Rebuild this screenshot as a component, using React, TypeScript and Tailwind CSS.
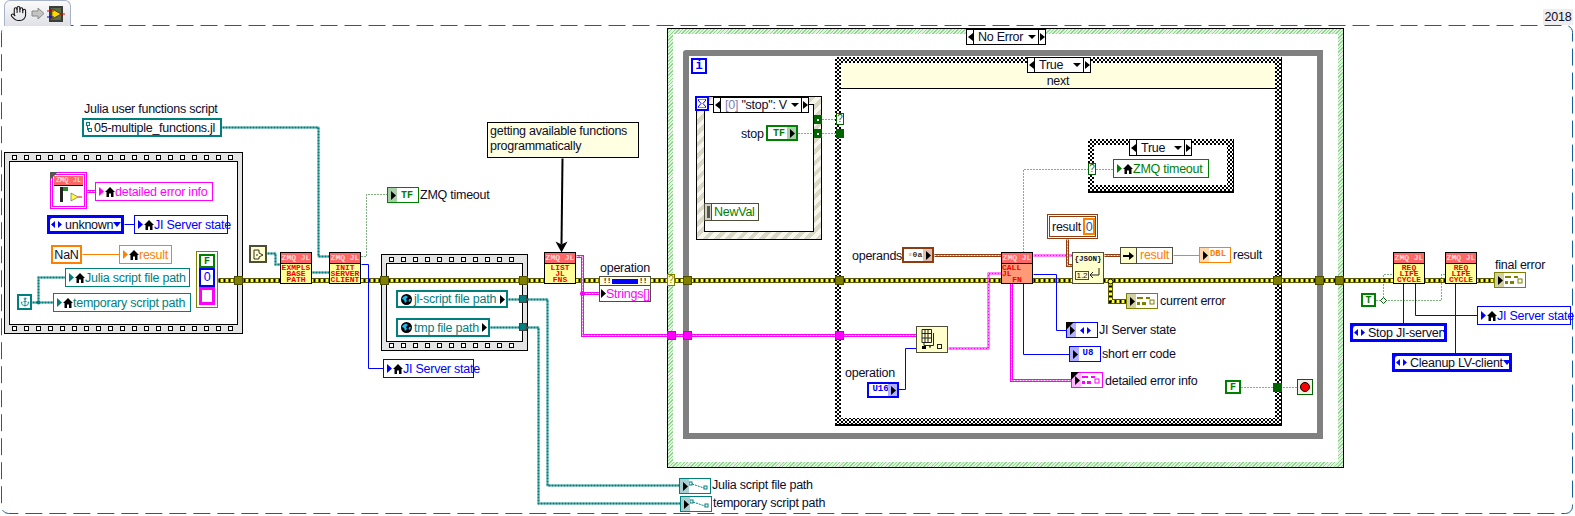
import { Anchor, Hand } from 'lucide-react';
import { FC, ReactNode } from 'react';

type Kind = 'err' | 'path' | 'pink' | 'str' | 'blue' | 'green' | 'brown' | 'orange';
type Pt = [number, number];

const wires: [Kind, Pt[]][] = [
   ['err', [[218, 280], [1494, 280]]],
   ['path', [[222, 127], [318, 127], [318, 256], [329, 256]]],
   ['path', [[267, 253], [275, 253], [275, 264], [280, 264]]],
   ['path', [[312, 272], [329, 272]]],
   ['green', [[361, 256], [366, 256], [366, 194], [387, 194]]],
   ['blue', [[361, 264], [368, 264], [368, 368], [383, 368]]],
   ['pink', [[87, 191], [95, 191]]],
   ['blue', [[124, 224], [134, 224]]],
   ['orange', [[82, 254], [119, 254]]],
   ['path', [[32, 302], [53, 302]]],
   ['path', [[38, 302], [38, 277], [65, 277]]],
   ['path', [[508, 299], [519, 299]]],
   ['path', [[490, 327], [519, 327]]],
   ['path', [[527, 299], [547, 299], [547, 485], [679, 485]]],
   ['path', [[527, 327], [538, 327], [538, 503], [680, 503]]],
   ['pink', [[576, 256], [582, 256], [582, 335], [916, 335]]],
   ['pink', [[582, 293], [600, 293]]],
   ['green', [[798, 133], [836, 133]]],
   ['green', [[822, 119], [836, 119]]],
   ['brown', [[934, 255], [1001, 255]]],
   ['str', [[1033, 255], [1072, 255]]],
   ['brown', [[1067, 239], [1067, 265], [1072, 265]]],
   ['brown', [[1104, 255], [1120, 255]]],
   ['orange', [[1173, 255], [1199, 255]]],
   ['green', [[1023, 252], [1023, 169], [1088, 169]]],
   ['green', [[1096, 169], [1113, 169]]],
   ['err', [[1110, 280], [1110, 301], [1126, 301]]],
   ['str', [[948, 348], [988, 348], [988, 273], [1001, 273]]],
   ['blue', [[898, 389], [905, 389], [905, 348], [916, 348]]],
   ['blue', [[1033, 274], [1056, 274], [1056, 330], [1066, 330]]],
   ['blue', [[1023, 283], [1023, 354], [1069, 354]]],
   ['pink', [[1011, 283], [1011, 380], [1071, 380]]],
   ['green', [[1241, 387], [1297, 387]]],
   ['green', [[1376, 300], [1441, 300], [1441, 274], [1445, 274]]],
   ['green', [[1383, 300], [1383, 274], [1393, 274]]],
   ['blue', [[1403, 283], [1403, 323]]],
   ['blue', [[1455, 283], [1455, 353]]],
   ['blue', [[1415, 283], [1415, 315], [1477, 315]]],
];

const WireLine: FC<{ kind: Kind; pts: Pt[] }> = ({ kind, pts }) => {
   const p = pts.map((q) => q.join(',')).join(' ');
   const line = (stroke: string, width: number, dash?: string) => (
      <polyline points={p} fill="none" stroke={stroke} strokeWidth={width} strokeDasharray={dash} />
   );
   if (kind === 'err')
      return (
         <g>
            {line('#5a5a00', 5)}
            {line('#ffff33', 3)}
            {line('#000000', 3, '2 3')}
         </g>
      );
   if (kind === 'path')
      return (
         <g>
            {line('#8cc4c4', 2)}
            {line('#007f7f', 2, '2 1')}
         </g>
      );
   if (kind === 'pink')
      return (
         <g>
            {line('#ff00ff', 3)}
            {line('#ffffff', 1, '2 1')}
         </g>
      );
   if (kind === 'str')
      return (
         <g>
            {line('#ff00ff', 2)}
            {line('#ffffff', 1, '1 2')}
         </g>
      );
   if (kind === 'brown')
      return (
         <g>
            {line('#8f3c10', 3)}
            {line('#ffffff', 1, '2 1')}
         </g>
      );
   if (kind === 'blue') return line('#0000ff', 1);
   if (kind === 'orange') return line('#ff8000', 1);
   return line('#006400', 1, '1 2');
};

const Box: FC<{ c: string; children?: ReactNode }> = ({ c, children }) => (
   <div className={`absolute ${c}`}>{children}</div>
);

const T: FC<{ c: string; children: ReactNode }> = ({ c, children }) => (
   <div className={`absolute whitespace-nowrap leading-[16px] text-[#0c0c2c] ${c}`}>{children}</div>
);

const Home = () => (
   <svg width="10" height="10" viewBox="0 0 10 10" className="shrink-0">
      <path d="M5 0 L10 5 L8.5 5 L8.5 10 L6 10 L6 6.5 L4 6.5 L4 10 L1.5 10 L1.5 5 L0 5 Z" fill="#000" />
   </svg>
);

const TriR = () => (
   <svg width="5" height="9" viewBox="0 0 5 9" className="shrink-0">
      <path d="M0 0 L5 4.5 L0 9 Z" fill="currentColor" />
   </svg>
);

const EnumArrows: FC<{ color?: string }> = ({ color = '#0000ff' }) => (
   <svg width="11" height="7" viewBox="0 0 11 7" className="shrink-0">
      <path d="M4 0 L0 3.5 L4 7 Z M7 0 L11 3.5 L7 7 Z" fill={color} />
   </svg>
);

const Local: FC<{ c: string; children: ReactNode }> = ({ c, children }) => (
   <div className={`absolute flex items-center border bg-white pl-[3px] whitespace-nowrap ${c}`}>
      <TriR />
      <span className="ml-[1px]">
         <Home />
      </span>
      <span className="leading-[16px]">{children}</span>
   </div>
);

const Globe = () => (
   <svg width="11" height="11" viewBox="0 0 11 11" className="shrink-0">
      <circle cx="5.5" cy="5.5" r="5.5" fill="#000" />
      <path d="M2 3 L5 1.5 L7 3 L5 5 L6 7 L4 9 L3 6 L1 5 Z M8 5 L10 5 L9 8 L7.5 7 Z" fill="#20b8f0" />
   </svg>
);

const GlobalVar: FC<{ c: string; children: ReactNode }> = ({ c, children }) => (
   <div className={`absolute flex items-center border-[2px] border-[#007f7f] bg-white pr-[1px] pl-[3px] whitespace-nowrap text-[#007f7f] ${c}`}>
      <Globe />
      <span className="ml-[2px] flex-1 leading-[16px]">{children}</span>
      <span className="text-black">
         <TriR />
      </span>
   </div>
);

const Vi: FC<{ c: string; lines: string[]; body?: string }> = ({ c, lines, body = 'bg-[#ffff99]' }) => (
   <div className={`absolute flex flex-col border border-black font-['Liberation_Mono'] tracking-normal ${body} ${c}`}>
      <div className="h-[11px] border-b border-black bg-[#ff6666] text-center text-[8px] leading-[10px] font-bold whitespace-pre text-[#ffdcdc]">
         ZMQ JL
      </div>
      <div className="flex flex-1 flex-col items-center justify-center text-[8px] leading-[6px] font-bold text-[#f00000]">
         {lines.map((l) => (
            <div key={l}>{l}</div>
         ))}
      </div>
   </div>
);

const Term: FC<{ c: string; tint: string; side?: 'l' | 'r'; children: ReactNode }> = ({ c, tint, side = 'l', children }) => (
   <div className={`absolute flex h-[16px] w-[32px] items-center justify-center border bg-white tracking-normal ${c}`}>
      <div className={`absolute top-0 bottom-0 w-[9px] ${side === 'l' ? 'left-0' : 'right-0'} ${tint}`} />
      <div className={`absolute text-black ${side === 'l' ? 'left-[3px]' : 'right-[1px]'}`}>
         <TriR />
      </div>
      {children}
   </div>
);

const ClusterGlyph: FC<{ color: string }> = ({ color }) => (
   <svg width="18" height="8" viewBox="0 0 18 8" className="ml-[7px]">
      <rect x="0" y="0" width="6" height="2" fill={color} />
      <rect x="9" y="0" width="4" height="2" fill={color} />
      <rect x="0" y="5" width="3" height="3" fill={color} />
      <rect x="5" y="5" width="4" height="3" fill={color} />
      <rect x="13" y="3" width="4" height="4" fill="none" stroke={color} />
   </svg>
);

const PathGlyph = () => (
   <svg width="22" height="10" viewBox="0 0 22 10" className="ml-[7px]">
      <rect x="1" y="1" width="3" height="3" fill="none" stroke="#007f7f" />
      <path d="M4 3 L16 7" stroke="#007f7f" strokeDasharray="2 1" />
      <rect x="16" y="5" width="3" height="3" fill="none" stroke="#007f7f" />
   </svg>
);

const Selector: FC<{ c: string; children: ReactNode }> = ({ c, children }) => (
   <div className={`absolute flex items-stretch border border-black bg-white ${c}`}>
      <div className="flex w-[7px] items-center justify-center border-r border-black">
         <span className="block h-0 w-0 border-y-[4px] border-r-[5px] border-y-transparent border-r-black" />
      </div>
      <div className="flex flex-1 items-center justify-between pr-[2px] pl-[4px] leading-[14px] whitespace-nowrap">
         <span>{children}</span>
         <span className="block h-0 w-0 border-x-[4px] border-t-[4px] border-x-transparent border-t-black" />
      </div>
      <div className="flex w-[7px] items-center justify-center border-l border-black">
         <span className="block h-0 w-0 border-y-[4px] border-l-[5px] border-y-transparent border-l-black" />
      </div>
   </div>
);

const Enum: FC<{ c: string; children: ReactNode }> = ({ c, children }) => (
   <div className={`absolute flex items-center overflow-hidden border-[3px] border-[#0000ff] bg-white pr-[2px] pl-[1px] whitespace-nowrap text-[#0c0c2c] ${c}`}>
      <div className="absolute -top-[3px] -left-[3px] h-0 w-0 border-t-[8px] border-r-[8px] border-t-[#555] border-r-transparent" />
      <span className="mr-[3px]">
         <EnumArrows />
      </span>
      <span className="flex-1 leading-[14px]">{children}</span>
      <span className="block h-0 w-0 border-x-[4px] border-t-[5px] border-x-transparent border-t-[#0000ff]" />
   </div>
);

const Sprockets: FC<{ c: string; n: number }> = ({ c, n }) => (
   <div className={`absolute flex gap-[7px] ${c}`}>
      {Array.from({ length: n }, (_, i) => (
         <span key={i} className="h-[5px] w-[5px] shrink-0 border border-black bg-white" />
      ))}
   </div>
);

const Film: FC<{ c: string; n: number }> = ({ c, n }) => (
   <div className={`absolute border border-black bg-[#e4e4e4] ${c}`}>
      <Sprockets c="top-[2px] left-[7px]" n={n} />
      <div className="absolute top-[8px] right-[4px] bottom-[8px] left-[4px] border border-black bg-white" />
      <Sprockets c="bottom-[2px] left-[7px]" n={n} />
   </div>
);

const CHECK = 'bg-[conic-gradient(#000_25%,#fff_0_50%,#000_0_75%,#fff_0)] bg-[length:4px_4px]';

const Check: FC<{ c: string; children?: ReactNode }> = ({ c, children }) => (
   <div className={`absolute border-r-[1px] border-b-[2px] border-black p-[6px] ${CHECK} ${c}`}>
      <div className="h-full w-full bg-white">{children}</div>
   </div>
);

const tunnels: string[] = [
   'left-[234px] top-[276px]',
   'left-[380px] top-[276px]',
   'left-[519px] top-[276px]',
   'left-[683px] top-[276px]',
   'left-[835px] top-[276px]',
   'left-[1273px] top-[276px]',
   'left-[1315px] top-[276px]',
   'left-[1335px] top-[276px]',
];

const pinkTunnels = ['left-[667px]', 'left-[683px]', 'left-[835px]'];

const App: FC = () => {
   return (
      <div className="relative h-[516px] w-[1575px] overflow-hidden bg-white font-['Liberation_Sans',sans-serif] text-[12.5px] tracking-[-0.25px] text-[#0c0c2c]">
         {/* structures */}
         <Film c="left-[4px] top-[152px] w-[239px] h-[182px]" n={19} />
         <Film c="left-[381px] top-[254px] w-[147px] h-[97px]" n={11} />

         <div className="absolute top-[28px] left-[667px] h-[440px] w-[677px] border-[1px] border-black bg-[repeating-linear-gradient(135deg,#8fd68f_0_1px,#dff3df_1px_2.5px)] p-[5px]">
            <div className="h-full w-full bg-white" />
         </div>
         <div className="absolute top-[50px] left-[683px] h-[389px] w-[640px] rounded-tl-[3px] border-[6px] border-[#808080] bg-white" />

         <div className="absolute top-[96px] left-[696px] h-[144px] w-[126px] border border-black bg-[repeating-linear-gradient(135deg,#d8d8c4_0_4px,#f6f6ec_4px_8px)] p-[7px]">
            <div className="h-full w-full border border-black bg-white" />
         </div>

         <Check c="left-[835px] top-[57px] w-[447px] h-[369px]">
            <div className="flex h-[26px] items-end justify-center border-b border-black bg-[#ffffdf] leading-[14px]">next</div>
         </Check>
         <Check c="left-[1088px] top-[139px] w-[146px] h-[54px]" />

         {/* wires and the dashed diagram frame */}
         <svg className="absolute inset-0" width="1575" height="516">
            <rect x="1.5" y="25.5" width="1571" height="488" rx="7" fill="none" stroke="#14609c" strokeWidth="1" strokeDasharray="17 7" />
            <g transform="translate(0.5 0.5)">
               {wires.map(([kind, pts], i) => (
                  <WireLine key={i} kind={kind} pts={pts} />
               ))}
               <line x1="562" y1="158" x2="561" y2="244" stroke="#000" strokeWidth="2" />
               <path d="M555 241 L561 244 L567 241 L561 252 Z" fill="#000" />
               <circle cx="38" cy="302" r="2" fill="#007f7f" />
               <circle cx="1110" cy="281" r="2.5" fill="#ffff33" stroke="#000" />
               <path d="M1383 297 L1386 300 L1383 303 L1380 300 Z" fill="#fff" stroke="#006400" />
               <circle cx="582" cy="293" r="2.5" fill="#ff00ff" />
            </g>
         </svg>

         {/* tab */}
         <div className="absolute top-0 left-[4px] flex h-[26px] w-[67px] items-center gap-[2px] rounded-t-[6px] border border-b-0 border-[#a8b2c8] bg-[linear-gradient(#fafafa,#dfe1e6)] pl-[5px]">
            <Hand size={17} strokeWidth={1.5} color="#111" />
            <svg width="14" height="13" viewBox="0 0 14 13" className="ml-[2px]">
               <path d="M1 4 L7 4 L7 1 L13 6.5 L7 12 L7 9 L1 9 Z" fill="#c4c4c4" stroke="#8a8a8a" />
            </svg>
            <svg width="18" height="16" viewBox="0 0 18 16">
               <rect x="2" y="0" width="14" height="16" fill="#3c3c3c" />
               <rect x="4" y="2" width="10" height="12" fill="#5a6a4a" />
               <path d="M5 3 L14 8 L5 13 Z" fill="#ffd800" stroke="#000" strokeWidth="0.5" />
               <line x1="0" y1="5" x2="7" y2="5" stroke="#e00000" />
               <line x1="0" y1="11" x2="7" y2="11" stroke="#0000e0" />
               <line x1="13" y1="8" x2="18" y2="8" stroke="#e00000" />
            </svg>
         </div>
         <div className="absolute top-[9px] left-[1543px] h-[16px] w-[30px] bg-[#eeeeee] text-center leading-[16px]">2018</div>

         {/* first sequence frame */}
         <div className="absolute top-[172px] left-[50px] h-[37px] w-[37px] border-[3px] border-double border-[#ff00ff] bg-white p-[1px]">
            <div className="h-[10px] border-b border-black bg-[#ff6666] text-center font-['Liberation_Mono'] text-[7px] leading-[9px] font-bold tracking-normal whitespace-nowrap text-[#ffdcdc]">ZMQ JL</div>
            <svg width="29" height="19" viewBox="0 0 29 19">
               <rect x="6" y="1" width="3" height="15" fill="#222" />
               <path d="M9 1 L14 1 L14 5 L9 5 Z" fill="#2a8a2a" />
               <path d="M17 7 L24 11 L17 15 Z" fill="#ffff33" stroke="#555" strokeWidth="0.6" />
               <path d="M24 11 L28 11" stroke="#e00000" />
            </svg>
         </div>
         <div className="absolute top-[172px] left-[50px] h-0 w-0 border-t-[8px] border-r-[8px] border-t-[#555] border-r-transparent" />
         <Local c="left-[95px] top-[182px] w-[118px] h-[19px] border-[#ff00ff] text-[#ff00ff]">detailed error info</Local>
         <Enum c="left-[47px] top-[215px] w-[77px] h-[19px]">unknown</Enum>
         <Local c="left-[134px] top-[215px] w-[94px] h-[19px] border-[#0000ff] text-[#0000ff]">JI Server state</Local>
         <div className="absolute top-[245px] left-[51px] flex h-[19px] w-[31px] items-center justify-center border-[2px] border-[#ff8000] bg-white leading-[14px]">NaN</div>
         <Local c="left-[119px] top-[245px] w-[53px] h-[19px] border-[#ff8000] text-[#ff8000]">result</Local>
         <Local c="left-[65px] top-[268px] w-[125px] h-[19px] border-[#007f7f] text-[#007f7f]">Julia script file path</Local>
         <Local c="left-[53px] top-[293px] w-[138px] h-[19px] border-[#007f7f] text-[#007f7f]">temporary script path</Local>
         <div className="absolute top-[294px] left-[17px] flex h-[16px] w-[15px] items-center justify-center border-[2px] border-[#007f7f] bg-white text-[#007f7f]">
            <Anchor size={10} strokeWidth={2} />
         </div>
         <div className="absolute top-[251px] left-[196px] flex h-[57px] w-[22px] flex-col border border-[#808000] bg-white p-[2px]">
            <div className="flex h-[14px] items-center justify-center border-[2px] border-[#007f00] font-['Liberation_Mono'] text-[10px] font-bold tracking-normal text-[#007f00]">F</div>
            <div className="flex h-[19px] items-center justify-center border-[2px] border-[#0000ff] leading-none text-[#0000ff]">0</div>
            <div className="flex-1 border-[3px] border-[#ff00ff]" />
         </div>

         {/* julia path constant */}
         <T c="left-[84px] top-[101px]">Julia user functions script</T>
         <div className="absolute top-[118px] left-[82px] flex h-[19px] w-[140px] items-center border-[2px] border-[#007f7f] bg-white pl-[2px] leading-[14px] whitespace-nowrap">
            <svg width="6" height="11" viewBox="0 0 6 11" className="mr-[2px] shrink-0">
               <rect x="0.5" y="0.5" width="3" height="3" fill="none" stroke="#007f7f" />
               <rect x="2.5" y="6.5" width="3" height="3" fill="none" stroke="#007f7f" />
               <path d="M1.5 3.5 V8 H3" fill="none" stroke="#007f7f" />
            </svg>
            05-multiple_functions.jl
         </div>

         <div className="absolute top-[245px] left-[249px] flex h-[18px] w-[18px] items-center justify-center border-[2px] border-[#4d4d3a] bg-[#ffffcc]">
            <svg width="11" height="11" viewBox="0 0 11 11">
               <path d="M1 1 H6 L6 4 L10 6 L6 8 V10 H1 Z M3 6 L5 6" fill="none" stroke="#333" />
            </svg>
         </div>
         <Vi c="left-[280px] top-[252px] w-[32px] h-[32px]" lines={['EXMPLS', 'BASE', 'PATH']} />
         <Vi c="left-[329px] top-[252px] w-[32px] h-[32px]" lines={['INIT', 'SERVER', 'CLIENT']} />

         <Term c="left-[387px] top-[187px] border-[#008000]" tint="bg-[#a8d0a8]">
            <span className="ml-[8px] font-['Liberation_Mono'] text-[10px] font-bold text-[#007f00]">TF</span>
         </Term>
         <T c="left-[420px] top-[187px]">ZMQ timeout</T>
         <Local c="left-[383px] top-[359px] w-[91px] h-[19px] border-[#0000ff] text-[#0000ff]">JI Server state</Local>

         {/* second sequence frame */}
         <GlobalVar c="left-[396px] top-[290px] w-[112px] h-[18px]">jl-script file path</GlobalVar>
         <GlobalVar c="left-[396px] top-[318px] w-[94px] h-[19px]">tmp file path</GlobalVar>
         <Box c="left-[519px] top-[295px] h-[8px] w-[8px] border border-[#444] bg-[#007f7f]" />
         <Box c="left-[519px] top-[323px] h-[8px] w-[8px] border border-[#444] bg-[#007f7f]" />

         <div className="absolute top-[122px] left-[487px] h-[36px] w-[152px] border border-black bg-[#ffffe1] pt-[1px] pl-[2px] leading-[15px] whitespace-nowrap">
            getting available functions
            <br />
            programmatically
         </div>
         <Vi c="left-[544px] top-[252px] w-[32px] h-[32px]" lines={['LIST', 'JL', 'FNS']} />
         <T c="left-[600px] top-[260px]">operation</T>
         <div className="absolute top-[276px] left-[599px] flex h-[26px] w-[52px] flex-col border border-[#4d4d3a] bg-white">
            <div className="flex h-[8px] items-center justify-between bg-[#ffffdf] px-[3px] font-['Liberation_Mono'] text-[7px] leading-[8px] font-bold">
               <span>!!</span>
               <span className="h-[5px] w-[26px] bg-[#0000ff]" />
               <span>!!</span>
            </div>
            <div className="flex flex-1 items-center border-t border-[#4d4d3a] pl-[1px] leading-[14px] whitespace-nowrap text-[#ff00ff]">
               <span className="text-black">
                  <TriR />
               </span>
               Strings[]
            </div>
         </div>

         {/* outer case */}
         <Selector c="left-[966px] top-[29px] w-[80px] h-[16px]">No Error</Selector>
         <Box c="left-[667px] top-[274px] flex h-[12px] w-[8px] items-center justify-center border border-[#808000] bg-[#ffffcc] text-[10px] leading-none text-[#808000]">
            ?
         </Box>
         {pinkTunnels.map((t) => (
            <div key={t} className={`absolute top-[331px] h-[9px] w-[9px] border border-[#803080] bg-[#ff00ff] ${t}`} />
         ))}

         {/* while loop and event structure */}
         <Box c="left-[691px] top-[58px] flex h-[16px] w-[16px] items-center justify-center border-[2px] border-[#0000ff] bg-white font-['Liberation_Mono'] text-[12px] font-bold text-[#0000ff]">
            i
         </Box>
         <Box c="left-[695px] top-[96px] flex h-[15px] w-[14px] items-center justify-center border-[2px] border-[#0000ff] bg-white">
            <svg width="8" height="9" viewBox="0 0 8 9">
               <path d="M0 0 H8 V1 L5 4.5 L8 8 V9 H0 V8 L3 4.5 L0 1 Z" fill="none" stroke="#0000ff" />
            </svg>
         </Box>
         <Selector c="left-[713px] top-[97px] w-[96px] h-[16px]">
            <span className="text-[#8080b0]">[0]</span> "stop": V
         </Selector>
         <T c="left-[741px] top-[126px]">stop</T>
         <Term c="left-[766px] top-[125px] border-[#008000] border-[2px]" tint="bg-[#a8d0a8]" side="r">
            <span className="mr-[6px] font-['Liberation_Mono'] text-[10px] font-bold text-[#007f00]">TF</span>
         </Term>
         <div className="absolute top-[203px] left-[704px] flex h-[18px] w-[55px] items-center border border-[#4d4d3a] bg-white leading-[14px] text-[#007f00]">
            <span className="mr-[2px] flex h-full w-[7px] items-center justify-center border-r border-[#4d4d3a] bg-[#d4d4c8]">
               <span className="h-[12px] w-[3px] bg-[#555]" />
            </span>
            NewVal
         </div>
         <Box c="left-[814px] top-[115px] flex h-[9px] w-[8px] items-center justify-center bg-[#006400]">
            <span className="h-[2px] w-[2px] bg-white" />
         </Box>
         <Box c="left-[814px] top-[129px] flex h-[9px] w-[8px] items-center justify-center bg-[#006400]">
            <span className="h-[2px] w-[2px] bg-white" />
         </Box>
         <Box c="left-[836px] top-[113px] flex h-[12px] w-[8px] items-center justify-center border border-[#006400] bg-white text-[10px] leading-none text-[#006400]">
            ?
         </Box>
         <Box c="left-[836px] top-[129px] h-[9px] w-[8px] bg-[#006400]" />

         {/* inner case */}
         <Selector c="left-[1027px] top-[57px] w-[64px] h-[16px]">True</Selector>
         <Selector c="left-[1129px] top-[139px] w-[63px] h-[17px]">True</Selector>
         <Box c="left-[1088px] top-[163px] flex h-[12px] w-[8px] items-center justify-center border border-[#006400] bg-white text-[10px] leading-none text-[#006400]">
            ?
         </Box>
         <Local c="left-[1113px] top-[159px] w-[96px] h-[19px] border-[#008000] text-[#008000]">ZMQ timeout</Local>

         <T c="left-[852px] top-[248px]">operands</T>
         <Term c="left-[902px] top-[247px] border-[#8f3c10] border-[2px]" tint="bg-[#e0c0b0]" side="r">
            <span className="mr-[6px] font-['Liberation_Mono'] text-[8px] font-bold text-[#333]">▫0a</span>
         </Term>
         <Vi c="left-[1001px] top-[252px] w-[32px] h-[32px]" lines={['CALL JL', 'FN']} body="bg-[#ff9a78]" />

         <div className="absolute top-[214px] left-[1047px] flex h-[25px] w-[51px] items-center border-[3px] border-double border-[#8f3c10] bg-white pl-[2px] leading-[14px]">
            result
            <span className="ml-[2px] flex h-[17px] w-[12px] items-center justify-center border-[2px] border-[#ff8000] text-[#0060c0]">0</span>
         </div>
         <div className="absolute top-[252px] left-[1072px] h-[32px] w-[32px] border border-[#4d4d3a] bg-[#ffffcc]">
            <div className="text-center font-['Liberation_Mono'] text-[7.5px] leading-[12px] font-bold tracking-normal">{'{JSON}'}</div>
            <div className="absolute bottom-[3px] left-[2px] h-[9px] w-[14px] border border-[#4d4d3a] text-center text-[8px] leading-[8px] tracking-normal">1.2</div>
            <svg className="absolute right-[1px] bottom-[3px]" width="13" height="12" viewBox="0 0 13 12">
               <path d="M10 0 V7 H1 M4 4 L1 7 L4 10" fill="none" stroke="#222" />
            </svg>
         </div>
         <div className="absolute top-[247px] left-[1120px] flex h-[17px] w-[53px] border border-[#4d4d3a] bg-white leading-[14px] text-[#ff8000]">
            <span className="mr-[3px] flex w-[16px] items-center justify-center border-r border-[#4d4d3a] bg-[#ffffcc]">
               <svg width="11" height="8" viewBox="0 0 11 8">
                  <path d="M0 3 H6 V0 L11 4 L6 8 V5 H0 Z" fill="#000" />
               </svg>
            </span>
            result
         </div>
         <Term c="left-[1199px] top-[247px] border-[#ff8000]" tint="bg-[#ffd8b0]">
            <span className="ml-[6px] font-['Liberation_Mono'] text-[9px] font-bold text-[#ff8000]">DBL</span>
         </Term>
         <T c="left-[1233px] top-[247px]">result</T>
         <Term c="left-[1126px] top-[293px] border-[#808000]" tint="bg-[#d0d0a0]">
            <ClusterGlyph color="#808000" />
         </Term>
         <T c="left-[1160px] top-[293px]">current error</T>

         <Term c="left-[1066px] top-[322px] border-[#0000ff]" tint="bg-[#b0b0ff]">
            <span className="ml-[7px]">
               <EnumArrows />
            </span>
         </Term>
         <div className="absolute top-[322px] left-[1066px] h-0 w-0 border-t-[8px] border-r-[8px] border-t-black border-r-transparent" />
         <T c="left-[1099px] top-[322px]">JI Server state</T>
         <Term c="left-[1069px] top-[346px] border-[#0000ff]" tint="bg-[#b0b0ff]">
            <span className="ml-[6px] font-['Liberation_Mono'] text-[9px] font-bold text-[#0000ff]">U8</span>
         </Term>
         <T c="left-[1102px] top-[346px]">short err code</T>
         <Term c="left-[1071px] top-[372px] border-[#ff00ff]" tint="bg-[#ffb8ff]">
            <ClusterGlyph color="#ff00ff" />
         </Term>
         <div className="absolute top-[372px] left-[1071px] h-0 w-0 border-t-[8px] border-r-[8px] border-t-black border-r-transparent" />
         <T c="left-[1105px] top-[373px]">detailed error info</T>

         <T c="left-[845px] top-[365px]">operation</T>
         <Term c="left-[867px] top-[382px] border-[#0000ff] border-[2px]" tint="bg-[#b0b0ff]" side="r">
            <span className="mr-[5px] font-['Liberation_Mono'] text-[9px] font-bold text-[#0000ff]">U16</span>
         </Term>
         <div className="absolute top-[326px] left-[916px] h-[27px] w-[32px] border border-[#4d4d3a] bg-[#ffffcc]">
            <svg className="absolute top-[1px] left-[2px]" width="26" height="24" viewBox="0 0 26 24">
               <path d="M3 1.5 H12.5 V14.5 H3 Z M3 5.5 H12.5 M3 10 H12.5 M6 1.5 V14.5 M9 1.5 V14.5 M5 14.5 V17.5 H14.5 V5" fill="none" stroke="#222" />
               <rect x="3" y="18" width="4" height="3" fill="#000" />
               <rect x="18.5" y="16.5" width="4" height="4" fill="none" stroke="#222" />
               <path d="M10 18 H12 M11 17 V20" stroke="#222" />
            </svg>
         </div>

         <Box c="left-[1225px] top-[380px] flex h-[14px] w-[16px] items-center justify-center border-[2px] border-[#007f00] bg-white font-['Liberation_Mono'] text-[10px] font-bold tracking-normal text-[#007f00]">
            F
         </Box>
         <Box c="left-[1273px] top-[383px] h-[9px] w-[9px] bg-[#006400]" />
         <Box c="left-[1297px] top-[379px] flex h-[16px] w-[16px] items-center justify-center border border-[#006400] bg-[#f0f0e4]">
            <span className="h-[10px] w-[10px] rounded-full border border-black bg-[#ff0000]" />
         </Box>

         {/* error tunnels */}
         {tunnels.map((t) => (
            <div key={t} className={`absolute h-[9px] w-[9px] border border-[#4d4d00] bg-[#808000] ${t}`} />
         ))}

         {/* right hand side */}
         <Vi c="left-[1393px] top-[252px] w-[32px] h-[32px]" lines={['REQ', 'LIFE', 'CYCLE']} />
         <Vi c="left-[1445px] top-[252px] w-[32px] h-[32px]" lines={['REQ', 'LIFE', 'CYCLE']} />
         <Box c="left-[1361px] top-[293px] flex h-[14px] w-[15px] items-center justify-center border-[2px] border-[#007f00] bg-white font-['Liberation_Mono'] text-[10px] font-bold tracking-normal text-[#007f00]">
            T
         </Box>
         <Enum c="left-[1350px] top-[323px] w-[97px] h-[19px]">Stop JI-server</Enum>
         <Enum c="left-[1392px] top-[353px] w-[120px] h-[19px]">Cleanup LV-client</Enum>
         <Local c="left-[1477px] top-[306px] w-[94px] h-[19px] border-[#0000ff] text-[#0000ff]">JI Server state</Local>
         <T c="left-[1495px] top-[257px]">final error</T>
         <Term c="left-[1494px] top-[272px] border-[#808000]" tint="bg-[#d0d0a0]">
            <ClusterGlyph color="#808000" />
         </Term>

         {/* bottom indicators */}
         <Term c="left-[679px] top-[478px] h-[15px] border-[#007f7f]" tint="bg-[#a8d0d0]">
            <PathGlyph />
         </Term>
         <T c="left-[712px] top-[477px]">Julia script file path</T>
         <Term c="left-[680px] top-[496px] h-[15px] border-[#007f7f]" tint="bg-[#a8d0d0]">
            <PathGlyph />
         </Term>
         <T c="left-[713px] top-[495px]">temporary script path</T>
      </div>
   );
};

export default App;
